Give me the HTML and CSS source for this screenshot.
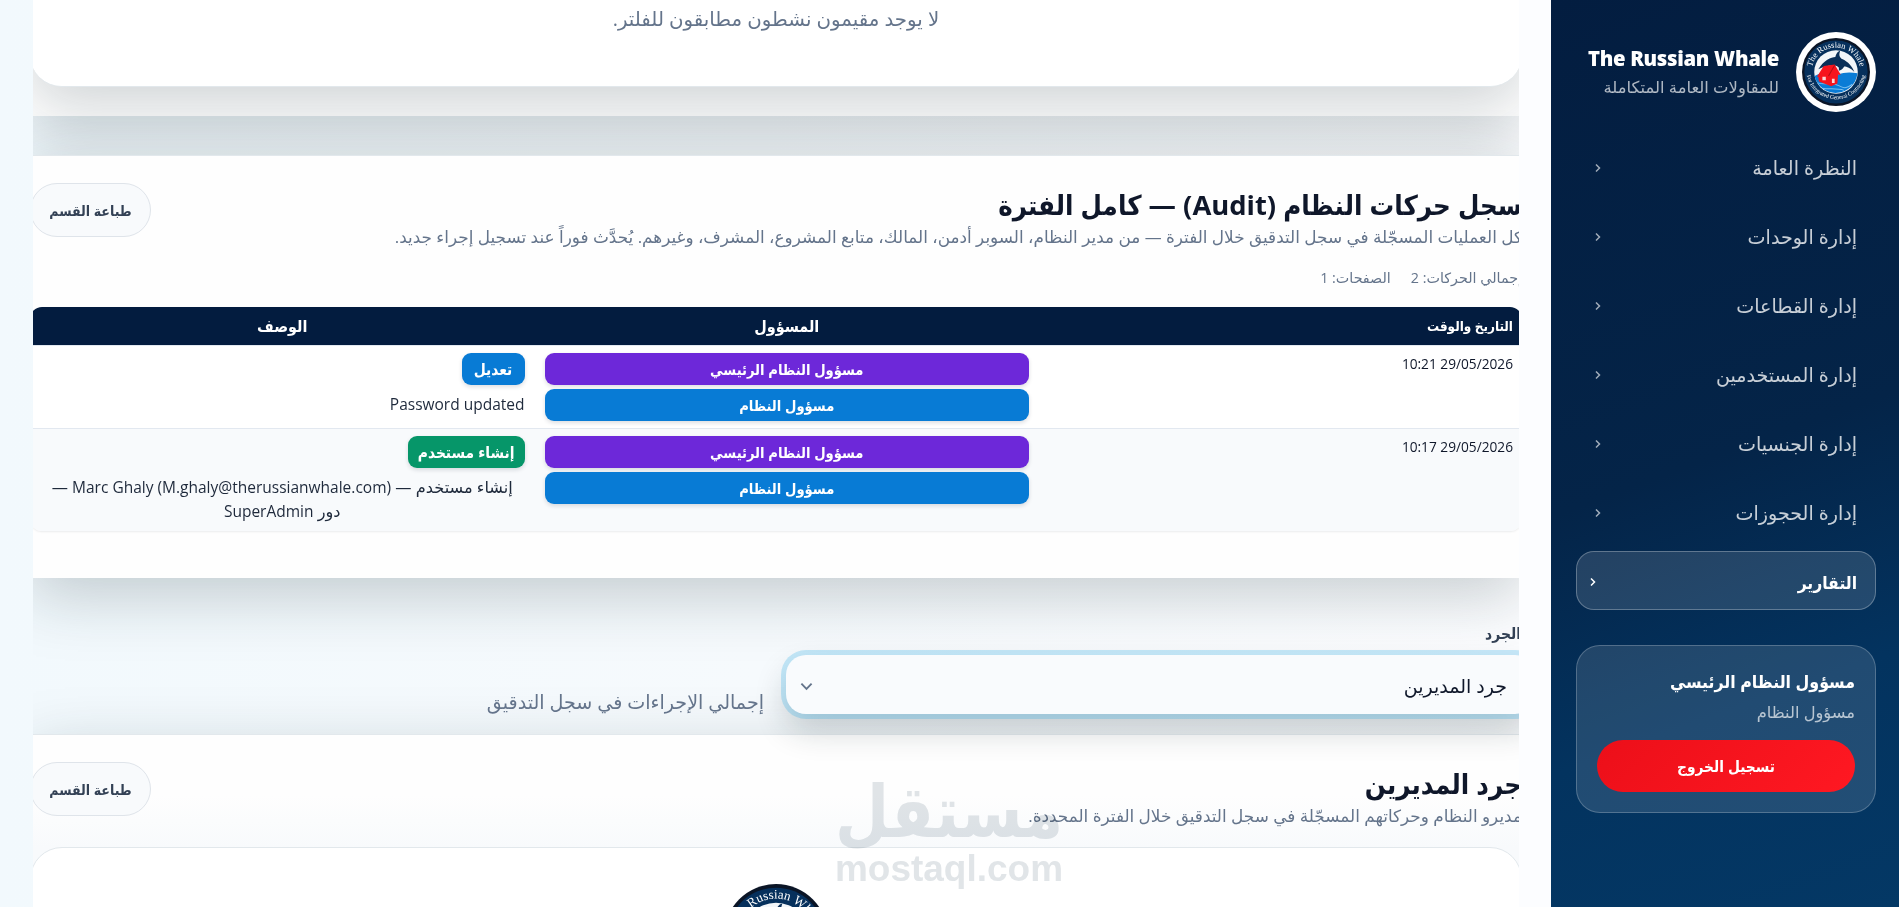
FILE: index.html
```html
<!DOCTYPE html>
<html lang="ar" dir="rtl">

<head>
    <meta charset="UTF-8">
    <meta name="viewport" content="width=device-width, initial-scale=1.0">
    <title>The Russian Whale - التقارير</title>
    <link rel="stylesheet" href="styles.css">
</head>

<body>
    <svg class="defs" width="0" height="0">
        <symbol id="logo" viewBox="0 0 100 100">
            <circle cx="50" cy="50" r="50" fill="#0b1526" />
            <circle cx="50" cy="50" r="46.500" fill="#06305c" />
            <circle cx="50" cy="50" r="32" fill="#f3f6f9" />
            <path d="M18.500 56 C28 48 40 58 52 54 C62 50 72 50 81.500 52 A32 32 0 0 1 18.500 56 Z" fill="#0a7cd6" />
            <path d="M23 66 C34 70 44 64 54 70 S68 72 74 68 M30 74 C40 76 50 73 62 77" fill="none" stroke="#7cc0f0" stroke-width="1.500" />
            <path d="M24 46 C32 33 43 28 49 28 C50 23 53 19 56 19 C54 25 55 28 59 31 C68 35 74 42 77 50 C71 44 66 42 62 42 C60 46 57 48 54 48 C55 44 54 42 51 41 C42 39 32 42 24 46 Z" fill="#0a2f58" />
            <path d="M22 57 L32 41 L48 39 L57 54 L53 54 L52 67 L43 71 L25 64 L24 57 Z" fill="#f7141d" />
            <path d="M39 56 L48 40" stroke="#b30d14" stroke-width="1.500" />
            <path d="M30 57 h5 v5 h-5z M44 60 h4 v6 h-4z" fill="#fbd6d8" />
            <path id="arc-top" d="M14 50 A36 36 0 0 1 86 50" fill="none" />
            <path id="arc-bottom" d="M6 46 A44 44 0 0 0 94 46" fill="none" />
            <text class="logo-text" direction="ltr"><textPath href="#arc-top" startOffset="50%">The Russian Whale</textPath></text>
            <text class="logo-text logo-text-small" direction="ltr"><textPath href="#arc-bottom" startOffset="50%">For Integrated General Contracting</textPath></text>
        </symbol>
    </svg>

    <div class="layout">
        <aside class="sidebar">
            <div class="brand">
                <div class="brand-logo"><svg><use href="#logo" /></svg></div>
                <div class="brand-text">
                    <div class="brand-name" dir="ltr">The Russian Whale</div>
                    <div class="brand-sub">للمقاولات العامة المتكاملة</div>
                </div>
            </div>
            <nav class="nav">
                <a class="nav-item"><span>النظرة العامة</span><svg class="chevron" viewBox="0 0 6 8"><path d="M1 .5 L4.500 4 L1 7.500" /></svg></a>
                <a class="nav-item"><span>إدارة الوحدات</span><svg class="chevron" viewBox="0 0 6 8"><path d="M1 .5 L4.500 4 L1 7.500" /></svg></a>
                <a class="nav-item"><span>إدارة القطاعات</span><svg class="chevron" viewBox="0 0 6 8"><path d="M1 .5 L4.500 4 L1 7.500" /></svg></a>
                <a class="nav-item"><span>إدارة المستخدمين</span><svg class="chevron" viewBox="0 0 6 8"><path d="M1 .5 L4.500 4 L1 7.500" /></svg></a>
                <a class="nav-item"><span>إدارة الجنسيات</span><svg class="chevron" viewBox="0 0 6 8"><path d="M1 .5 L4.500 4 L1 7.500" /></svg></a>
                <a class="nav-item"><span>إدارة الحجوزات</span><svg class="chevron" viewBox="0 0 6 8"><path d="M1 .5 L4.500 4 L1 7.500" /></svg></a>
                <a class="nav-item active"><span>التقارير</span><svg class="chevron" viewBox="0 0 6 8"><path d="M1 .5 L4.500 4 L1 7.500" /></svg></a>
            </nav>
            <div class="user-card">
                <div class="user-name">مسؤول النظام الرئيسي</div>
                <div class="user-role">مسؤول النظام</div>
                <button class="logout">تسجيل الخروج</button>
            </div>
        </aside>

        <main class="main">
            <div class="content">
                <section class="section section-residents">
                    <div class="empty-card">لا يوجد مقيمون نشطون مطابقون للفلتر.</div>
                </section>

                <section class="section section-audit">
                    <div class="section-head">
                        <div>
                            <h2>سجل حركات النظام (Audit) — كامل الفترة</h2>
                            <p class="section-sub">كل العمليات المسجّلة في سجل التدقيق خلال الفترة — من مدير النظام، السوبر أدمن، المالك، متابع المشروع، المشرف، وغيرهم. يُحدَّث فوراً عند تسجيل إجراء جديد.</p>
                        </div>
                        <button class="print-btn">طباعة القسم</button>
                    </div>
                    <div class="meta">
                        <span>إجمالي الحركات: 2</span>
                        <span>الصفحات: 1</span>
                    </div>
                    <table class="audit-table">
                        <thead>
                            <tr>
                                <th class="col-date">التاريخ والوقت</th>
                                <th>المسؤول</th>
                                <th>الوصف</th>
                            </tr>
                        </thead>
                        <tbody>
                            <tr>
                                <td class="col-date">29/05/2026 10:21</td>
                                <td>
                                    <span class="badge badge-purple">مسؤول النظام الرئيسي</span>
                                    <span class="badge badge-blue">مسؤول النظام</span>
                                </td>
                                <td>
                                    <span class="badge badge-blue badge-fit">تعديل</span>
                                    <div class="desc latin" dir="ltr">Password updated</div>
                                </td>
                            </tr>
                            <tr>
                                <td class="col-date">29/05/2026 10:17</td>
                                <td>
                                    <span class="badge badge-purple">مسؤول النظام الرئيسي</span>
                                    <span class="badge badge-blue">مسؤول النظام</span>
                                </td>
                                <td>
                                    <span class="badge badge-green badge-fit">إنشاء مستخدم</span>
                                    <div class="desc desc-center">إنشاء مستخدم — <span class="latin">Marc Ghaly (M.ghaly@therussianwhale.com)</span> —<br>دور <span class="latin">SuperAdmin</span></div>
                                </td>
                            </tr>
                        </tbody>
                    </table>
                </section>

                <div class="filter-row">
                    <div class="field">
                        <label>الجرد</label>
                        <div class="select">
                            <span>جرد المديرين</span>
                            <svg class="select-arrow" viewBox="0 0 14 9"><path d="M1.500 1.500 L7 7 L12.500 1.500" /></svg>
                        </div>
                    </div>
                    <div class="hint">إجمالي الإجراءات في سجل التدقيق</div>
                </div>

                <section class="section section-managers">
                    <div class="section-head">
                        <div>
                            <h2>جرد المديرين</h2>
                            <p class="section-sub">مديرو النظام وحركاتهم المسجّلة في سجل التدقيق خلال الفترة المحددة.</p>
                        </div>
                        <button class="print-btn">طباعة القسم</button>
                    </div>
                    <div class="report-card">
                        <svg class="report-logo"><use href="#logo" /></svg>
                    </div>
                </section>
            </div>
        </main>
    </div>

    <svg class="watermark" viewBox="0 0 230 115">
        <text x="115" y="57" textLength="228" lengthAdjust="spacingAndGlyphs" font-size="72">مستقل</text>
        <text class="watermark-latin" x="115" y="101" textLength="228" lengthAdjust="spacingAndGlyphs" font-size="37" direction="ltr">mostaql.com</text>
    </svg>
</body>

</html>
```

FILE: styles.css
```css
* {
    box-sizing: border-box;
}

body {
    margin: 0;
    height: 100vh;
    overflow: hidden;
    font-family: "Open Sans", "DejaVu Sans", sans-serif;
    color: #0f172a;
    background: linear-gradient(90deg, #f2f9fd 0%, #f6fafd 40%, #fcfdff 80%);
}

h2,
p {
    margin: 0;
}

.defs {
    position: absolute;
}

.logo-text {
    font-family: "Liberation Serif", serif;
    font-size: 12.5px;
    fill: #fff;
    text-anchor: middle;
}

.logo-text-small {
    font-size: 8.5px;
}

/* bold arabic is set in the condensed face */
h2,
th,
.badge,
.user-name,
.logout,
.print-btn,
.field label,
.nav-item.active {
    font-family: "Open Sans", "DejaVu Sans Condensed", "DejaVu Sans", sans-serif;
}

.layout {
    display: flex;
    height: 100vh;
}

/* sidebar */

.sidebar {
    width: 348px;
    flex: none;
    padding: 32px 23px 0 25px;
    color: #fff;
    background: linear-gradient(160deg, #031d40 0%, #042448 50%, #03335f 75%, #043865 100%);
}

.brand {
    display: flex;
    align-items: center;
    gap: 17px;
    height: 80px;
    margin-bottom: 25px;
}

.brand-logo {
    width: 80px;
    height: 80px;
    padding: 6px;
    border-radius: 50%;
    background: #fff;
}

.brand-logo svg {
    display: block;
    width: 68px;
    height: 68px;
}

.brand-name {
    font-size: 20.3px;
    font-weight: 800;
    line-height: 28px;
    letter-spacing: -0.3px;
    white-space: nowrap;
}

.brand-sub {
    padding-top: 1px;
    font-size: 16.4px;
    line-height: 28px;
    color: rgba(255, 255, 255, 0.68);
    white-space: nowrap;
}

.nav {
    display: flex;
    flex-direction: column;
    gap: 10px;
    margin-bottom: 35px;
}

.nav-item {
    display: flex;
    align-items: center;
    justify-content: space-between;
    height: 59px;
    padding: 2px 18px 0;
    border: 1px solid transparent;
    border-radius: 18px;
    font-size: 19.1px;
    color: rgba(255, 255, 255, 0.78);
}

.chevron {
    width: 6px;
    height: 8px;
    fill: none;
    stroke: currentColor;
    stroke-width: 1.5;
    opacity: 0.8;
}

.nav-item.active {
    padding-left: 13px;
    font-size: 17.4px;
    font-weight: 600;
    color: #fff;
    background: rgba(255, 255, 255, 0.13);
    border-color: rgba(255, 255, 255, 0.28);
}

.active .chevron {
    opacity: 1;
}

.user-card {
    height: 168px;
    padding: 19px 20px 0;
    border: 1px solid rgba(255, 255, 255, 0.22);
    border-radius: 24px;
    background: rgba(255, 255, 255, 0.12);
}

.user-name {
    font-size: 17.6px;
    font-weight: 700;
    line-height: 32px;
}

.user-role {
    font-size: 16.3px;
    line-height: 30px;
    color: rgba(255, 255, 255, 0.68);
}

.logout {
    display: block;
    width: 100%;
    height: 52px;
    margin-top: 13px;
    border: 0;
    border-radius: 26px;
    font-size: 15.3px;
    font-weight: 700;
    color: #fff;
    background: linear-gradient(135deg, #ec0f19, #ff1822);
}

/* content */

.main {
    flex: 1;
    min-width: 0;
    padding: 0 32px 0 33px;
}

.content {
    height: 100vh;
    overflow: hidden;
}

.section {
    margin: 0 -3px;
    background: #fefefe;
    box-shadow: 0 18px 60px rgba(20, 40, 45, 0.22);
}

.section-residents {
    height: 116px;
    overflow: hidden;
}

.empty-card {
    height: 87px;
    border-bottom: 1px solid #e2e8ec;
    border-radius: 0 0 32px 32px;
    background: #fff;
    box-shadow: 0 18px 60px rgba(20, 40, 50, 0.2);
    font-size: 19.8px;
    line-height: 38px;
    text-align: center;
    color: #64748b;
}

.section-audit {
    height: 423px;
    margin-top: 39px;
    padding-top: 27px;
    border-top: 1px solid #e2e8ec;
}

.section-head {
    display: flex;
    justify-content: space-between;
    align-items: flex-start;
    height: 70px;
}

h2 {
    font-size: 27.4px;
    font-weight: 700;
    line-height: 44px;
    white-space: nowrap;
}

.section-sub {
    font-size: 16.88px;
    line-height: 20px;
    color: #64748b;
    white-space: nowrap;
}

.print-btn {
    flex: none;
    width: 121px;
    height: 54px;
    border: 1px solid #dfe4ea;
    border-radius: 27px;
    background: #f8fafc;
    font-size: 14px;
    font-weight: 700;
    white-space: nowrap;
    color: #334155;
}

.meta {
    display: flex;
    gap: 20px;
    padding-top: 10px;
    height: 54px;
    font-size: 14.3px;
    line-height: 30px;
    color: #64748b;
}

.audit-table {
    width: 100%;
    table-layout: fixed;
    border-spacing: 0;
    border-radius: 12px;
    overflow: hidden;
    box-shadow: 0 1px 2px rgba(15, 23, 42, 0.08);
}

th {
    height: 38px;
    padding: 0;
    background: #031c3f;
    color: #fff;
    font-size: 16px;
}

td {
    height: 83px;
    padding: 7px 10px 3px;
    border-top: 1px solid #e2e8f0;
    vertical-align: top;
    background: #fff;
}

tr:last-child td {
    height: 103px;
    background: #f8fafc;
}

.col-date {
    width: 483px;
    padding-right: 9px;
    text-align: right;
    font-size: 13.7px;
}

th.col-date {
    font-size: 13.4px;
}

td.col-date {
    line-height: 22px;
}

.badge {
    display: block;
    height: 32px;
    margin-bottom: 4px;
    border-radius: 9px;
    font-size: 14.6px;
    font-weight: 700;
    line-height: 33px;
    text-align: center;
    color: #fff;
    box-shadow: 0 2px 4px rgba(15, 23, 42, 0.14);
}

.badge-purple {
    background: #6d28d9;
}

.badge-blue {
    background: #087bd5;
}

.badge-green {
    background: #069669;
}

.badge-fit {
    width: fit-content;
    min-width: 63px;
    padding: 0 10px;
    font-size: 15.4px;
}

.desc {
    padding-top: 4px;
    font-size: 16.2px;
    line-height: 23.5px;
    text-align: right;
    white-space: nowrap;
    color: #1e293b;
}

.desc-center {
    text-align: center;
}

.latin {
    font-size: 15.5px;
}

.filter-row {
    display: flex;
    align-items: flex-end;
    gap: 22px;
    height: 156px;
    padding-bottom: 20px;
}

/* the field runs past the clipped edge of the content */
.field {
    flex: none;
    width: 749px;
    margin-right: -16px;
}

.field label {
    display: block;
    padding: 0 14px 7px 0;
    font-size: 15.5px;
    font-weight: 700;
    line-height: 30px;
    color: #334155;
}

.select {
    display: flex;
    align-items: center;
    justify-content: space-between;
    height: 59px;
    padding: 3px 28px 0 14px;
    border-radius: 20px;
    background: #f9fbfd;
    box-shadow: 0 0 0 5px rgba(14, 165, 233, 0.22), 0 16px 32px rgba(20, 40, 45, 0.2);
    font-size: 19px;
}

.select-arrow {
    width: 13px;
    height: 9px;
    fill: none;
    stroke: #64748b;
    stroke-width: 2;
}

.hint {
    font-size: 19.1px;
    line-height: 24px;
    color: #64748b;
}

.section-managers {
    height: 400px;
    padding-top: 27px;
    border-top: 1px solid #e2e8ec;
    background: linear-gradient(#fefefe, #fefefe 60px, #f8fafc 112px);
}

.section-managers .section-head {
    height: 85px;
}

.report-card {
    display: flex;
    justify-content: center;
    height: 300px;
    padding-top: 36px;
    border: 1px solid #e2e8ec;
    border-radius: 32px;
    background: #fff;
}

.report-logo {
    width: 104px;
    height: 104px;
}

.watermark {
    position: absolute;
    left: 834px;
    top: 780px;
    width: 230px;
    height: 115px;
    fill: #e1e5e8;
    mix-blend-mode: multiply;
    text-anchor: middle;
    font-family: "DejaVu Sans", sans-serif;
    font-weight: 700;
}

.watermark-latin {
    font-family: "Liberation Sans", sans-serif;
}
```
